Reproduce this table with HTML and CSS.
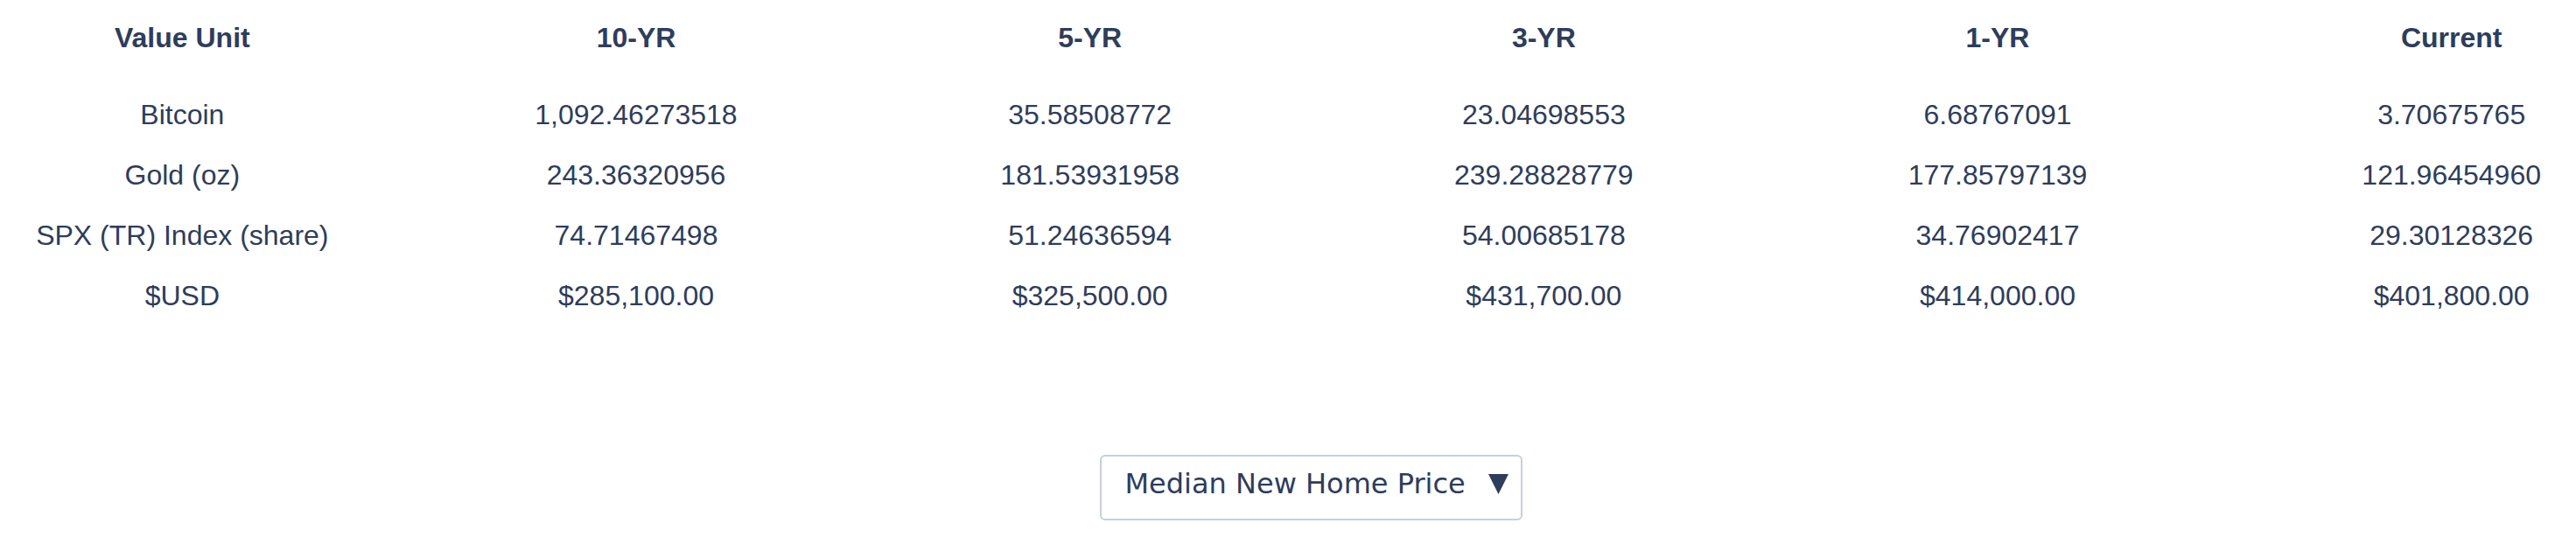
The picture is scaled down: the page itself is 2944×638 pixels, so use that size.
FILE: index.html
```html
<!DOCTYPE html>
<html>
<head>
  <meta charset="utf-8">
  <title>Value Unit</title>
  <link rel="stylesheet" href="styles.css">
</head>
<body>
    <div class="value-table">
        <div class="row head">
            <div class="cell">Value Unit</div>
            <div class="cell">10-YR</div>
            <div class="cell">5-YR</div>
            <div class="cell">3-YR</div>
            <div class="cell">1-YR</div>
            <div class="cell">Current</div>
        </div>
        <div class="row">
            <div class="cell">Bitcoin</div>
            <div class="cell">1,092.46273518</div>
            <div class="cell">35.58508772</div>
            <div class="cell">23.04698553</div>
            <div class="cell">6.68767091</div>
            <div class="cell">3.70675765</div>
        </div>
        <div class="row">
            <div class="cell">Gold (oz)</div>
            <div class="cell">243.36320956</div>
            <div class="cell">181.53931958</div>
            <div class="cell">239.28828779</div>
            <div class="cell">177.85797139</div>
            <div class="cell">121.96454960</div>
        </div>
        <div class="row">
            <div class="cell">SPX (TR) Index (share)</div>
            <div class="cell">74.71467498</div>
            <div class="cell">51.24636594</div>
            <div class="cell">54.00685178</div>
            <div class="cell">34.76902417</div>
            <div class="cell">29.30128326</div>
        </div>
        <div class="row">
            <div class="cell">$USD</div>
            <div class="cell">$285,100.00</div>
            <div class="cell">$325,500.00</div>
            <div class="cell">$431,700.00</div>
            <div class="cell">$414,000.00</div>
            <div class="cell">$401,800.00</div>
        </div>
    </div>

    <div class="controls">
        <div class="select">
            <span class="select-label">Median New Home Price</span>
            <svg class="select-arrow" width="23" height="23" viewBox="0 0 23 23">
                <polygon points="0,0 23,0 11.5,23" fill="#2e3d5b"/>
            </svg>
        </div>
    </div>
</body>
</html>
```

FILE: styles.css
```css
* {
    padding: 0px;
    margin: 0px;
    box-sizing: border-box;
}

body {
    background-color: #fff;
    color: #2e3d5b;
    font-family: "Liberation Sans", Arial, sans-serif;
    overflow: hidden;
}

.value-table {
    width: 3112px;
    margin-left: -51px;
    padding-top: 9px;
}

.row {
    display: grid;
    grid-template-columns: repeat(6, 1fr);
    align-items: center;
    height: 69px;
    font-size: 32px;
    text-align: center;
}

.row.head {
    font-weight: bold;
    margin-bottom: 19px;
}

.controls {
    display: flex;
    justify-content: center;
    padding-left: 52px;
    margin-top: 147px;
}

.select {
    display: flex;
    align-items: center;
    width: 483px;
    height: 75px;
    padding: 0 14px 9px 27px;
    border: 2px solid #c7cfdc;
    border-radius: 6px;
    font-family: Verdana, "DejaVu Sans", sans-serif;
    font-size: 32px;
}

.select-label {
    flex: 1;
}

.select-arrow {
    display: block;
}
```
